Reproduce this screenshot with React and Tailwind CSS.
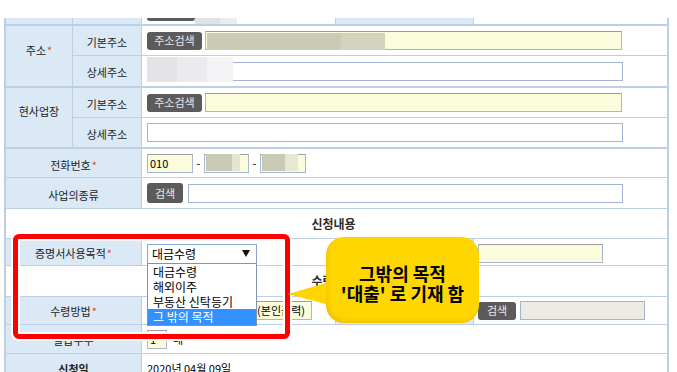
import React from "react";

const HEAD = "bg-[#dbe8f6]";
const LINE = "border-[#bdcfe5]";
const YELLOW = "border-[#a8b6d3] border-t-[#9c9c9c] bg-[#fafcdc]";
const WHITE = "border-[#a3b3d6] bg-white";

const Star = () => <span className="ml-[1px] text-[#e4471c]">*</span>;

const DarkBtn = ({ children, className = "" }) => (
  <span
    className={`flex h-[18px] shrink-0 items-center justify-center rounded-[3px] bg-[#5b5b5b] text-[11px] leading-none text-[#e9e9e9] ${className}`}
  >
    {children}
  </span>
);

const Field = ({ className = "", children }) => (
  <div className={`flex h-[19px] shrink-0 items-center border px-[2px] text-[11px] text-black ${className}`}>
    {children}
  </div>
);

const Label = ({ children, className = "" }) => (
  <div className={`flex shrink-0 items-center justify-center border-r ${LINE} ${HEAD} ${className}`}>{children}</div>
);

const options = ["대금수령", "해외이주", "부동산 신탁등기", "그 밖의 목적"];

export default function App() {
  return (
    <div className="relative h-[372px] w-[677px] overflow-hidden bg-white font-['Noto_Sans_CJK_KR','Noto_Sans',sans-serif] text-[11px] text-[#222]">
      <div className={`ml-[4px] mt-[18px] w-[665px] border-x-2 ${LINE}`}>
        {/* row cut off at the top */}
        <div className={`flex h-[8px] border-b-2 ${LINE}`}>
          <Label className="w-[67px]" />
          <Label className="w-[69px]" />
          <div className={`flex w-[194px] items-start border-r ${LINE} pl-[5px]`}>
            <div className="h-[3px] w-[48px] rounded-b-[3px] bg-[#5b5b5b]" />
            <div className="h-[6px] w-[25px] bg-[#e2e2e2]" />
            <div className="h-[6px] w-[17px] bg-[#ececec]" />
          </div>
          <Label className="w-[138px]" />
          <div className="flex-1" />
        </div>

        {/* 주소 */}
        <div className={`flex border-b-2 ${LINE}`}>
          <Label className="w-[67px] pb-[12px]">
            주소<Star />
          </Label>
          <div className="flex-1">
            <div className={`flex h-[30px] border-b ${LINE}`}>
              <Label className="w-[69px] pt-[4px]">기본주소</Label>
              <div className="flex flex-1 items-center gap-[3px] pl-[5px]">
                <DarkBtn className="w-[55px]">주소검색</DarkBtn>
                <Field className={`w-[417px] ${YELLOW}`} />
              </div>
            </div>
            <div className="flex h-[30px]">
              <Label className="w-[69px] pt-[2px]">상세주소</Label>
              <div className="flex flex-1 items-center pl-[5px]">
                <Field className={`w-[476px] ${WHITE}`} />
              </div>
            </div>
          </div>
        </div>

        {/* 현사업장 */}
        <div className={`flex border-b-2 ${LINE}`}>
          <Label className="w-[67px] pb-[12px]">현사업장</Label>
          <div className="flex-1">
            <div className={`flex h-[30px] border-b ${LINE}`}>
              <Label className="w-[69px] pt-[4px]">기본주소</Label>
              <div className="flex flex-1 items-center gap-[3px] pl-[5px]">
                <DarkBtn className="w-[55px]">주소검색</DarkBtn>
                <Field className={`w-[417px] ${YELLOW}`} />
              </div>
            </div>
            <div className="flex h-[29px]">
              <Label className="w-[69px] pt-[4px]">상세주소</Label>
              <div className="flex flex-1 items-center pl-[5px]">
                <Field className={`w-[476px] ${WHITE}`} />
              </div>
            </div>
          </div>
        </div>

        {/* 전화번호 */}
        <div className={`flex h-[29px] border-b ${LINE}`}>
          <Label className="w-[136px] pt-[4px]">
            전화번호<Star />
          </Label>
          <div className="flex flex-1 items-center pl-[5px]">
            <Field className={`w-[46px] ${YELLOW}`}>010</Field>
            <span className="w-[11px] text-center text-black">-</span>
            <Field className={`w-[45px] ${YELLOW}`} />
            <span className="w-[11px] text-center text-black">-</span>
            <Field className={`w-[46px] ${YELLOW}`} />
          </div>
        </div>

        {/* 사업의종류 */}
        <div className={`flex h-[31px] border-b ${LINE}`}>
          <Label className="w-[136px] pt-[4px]">사업의종류</Label>
          <div className="flex flex-1 items-center gap-[5px] pl-[5px]">
            <DarkBtn className="h-[20px] w-[36px]">검색</DarkBtn>
            <Field className={`w-[435px] ${WHITE}`} />
          </div>
        </div>

        {/* 신청내용 */}
        <div className={`flex h-[30px] items-center justify-center border-b ${LINE} pr-[6px] text-[12px] font-bold text-[#2b2b2b]`}>
          신청내용
        </div>

        {/* 증명서사용목적 */}
        <div className={`flex h-[27px] border-b ${LINE}`}>
          <Label className="w-[136px] pt-[2px]">
            증명서사용목적<Star />
          </Label>
          <div className={`flex w-[194px] items-center border-r ${LINE} pl-[5px] pt-[3px]`}>
            <div className="flex h-[20px] w-[110px] items-center justify-between border border-[#86a6d6] bg-white pl-[4px] pr-[6px] text-[12px] text-black">
              대금수령
              <svg width="8" height="7" viewBox="0 0 8 7">
                <path d="M0 0 H8 L4 7 Z" fill="#111" />
              </svg>
            </div>
          </div>
          <Label className="w-[138px]">제출처</Label>
          <div className="flex flex-1 items-center pl-[4px] pt-[2px]">
            <Field className={`w-[125px] ${YELLOW}`} />
          </div>
        </div>

        {/* 수령정보 */}
        <div className={`flex h-[31px] items-center justify-center border-b ${LINE} pr-[6px] text-[12px] font-bold text-[#2b2b2b]`}>
          수령정보
        </div>

        {/* 수령방법 */}
        <div className={`flex h-[28px] border-b ${LINE}`}>
          <Label className="w-[136px] pt-[2px]">
            수령방법<Star />
          </Label>
          <div className={`flex w-[194px] items-center border-r ${LINE} pl-[5px]`}>
            <Field className={`w-[165px] justify-end pr-[6px] ${YELLOW}`}>방문수령(본인출력)</Field>
          </div>
          <Label className="w-[138px]">발급방법</Label>
          <div className="flex flex-1 items-center gap-[4px] pl-[4px]">
            <DarkBtn className="w-[38px]">검색</DarkBtn>
            <Field className="w-[125px] border-[#a3b3d6] bg-[#ebebe4]" />
          </div>
        </div>

        {/* 발급부수 */}
        <div className={`flex h-[29px] border-b ${LINE}`}>
          <Label className="w-[136px] pt-[2px]">발급부수</Label>
          <div className="flex flex-1 items-center pl-[5px]">
            <Field className={`h-[17px] w-[20px] ${YELLOW}`}>1</Field>
            <span className="ml-[6px] text-black">매</span>
          </div>
        </div>

        {/* 신청일 */}
        <div className={`flex h-[30px] border-b ${LINE}`}>
          <Label className="w-[136px] pt-[2px] font-bold">신청일</Label>
          <div className="flex flex-1 items-center pl-[5px] text-black">2020년 04월 09일</div>
        </div>
      </div>

      {/* redacted values */}
      <div className="absolute left-[207px] top-[33px] h-[17px] w-[134px] bg-[#c9cbb4]" />
      <div className="absolute left-[341px] top-[33px] h-[17px] w-[44px] bg-[#d2d4bf]" />
      <div className="absolute left-[147px] top-[57px] h-[25px] w-[30px] bg-[#e3e3e7]" />
      <div className="absolute left-[177px] top-[57px] h-[25px] w-[30px] bg-[#ebebef]" />
      <div className="absolute left-[207px] top-[57px] h-[25px] w-[26px] bg-[#f3f3f5]" />
      <div className="absolute left-[206px] top-[154px] h-[17px] w-[26px] bg-[#c9cab4]" />
      <div className="absolute left-[232px] top-[154px] h-[17px] w-[8px] bg-[#e3e5d0]" />
      <div className="absolute left-[262px] top-[154px] h-[17px] w-[23px] bg-[#c9cab4]" />
      <div className="absolute left-[285px] top-[154px] h-[17px] w-[13px] bg-[#e6e8d3]" />

      {/* open select list */}
      <div className="absolute left-[147px] top-[263px] w-[110px] border border-[#8293ad] bg-white text-[12px] leading-[15px] text-black">
        {options.map((o, i) => (
          <div
            key={o}
            className={`h-[15px] whitespace-nowrap pl-[5px] ${i === 3 ? "h-[16px] bg-[#3391ff] text-white" : ""}`}
          >
            {o}
          </div>
        ))}
      </div>

      {/* red highlight box */}
      <div className="pointer-events-none absolute left-[13px] top-[234px] h-[105px] w-[277px] rounded-[6px] border-[5px] border-[#ff0000] shadow-[0_0_0_2px_#fff,inset_0_0_0_2px_#fff]" />

      {/* callout */}
      <svg className="absolute left-[285px] top-[275px]" width="50" height="40" viewBox="0 0 50 40">
        <path d="M48 6 L3 19 L48 31 Z" fill="#ffd400" />
      </svg>
      <div className="absolute left-[326px] top-[237px] flex h-[86px] w-[153px] flex-col items-center justify-center rounded-[18px] bg-[#ffd700] pt-[5px] text-[18px] font-bold leading-[20px] text-black shadow-[inset_2px_-3px_4px_rgba(214,160,0,0.35)]">
        <span>그밖의 목적</span>
        <span className="whitespace-nowrap">'대출' 로 기재 함</span>
      </div>
    </div>
  );
}
